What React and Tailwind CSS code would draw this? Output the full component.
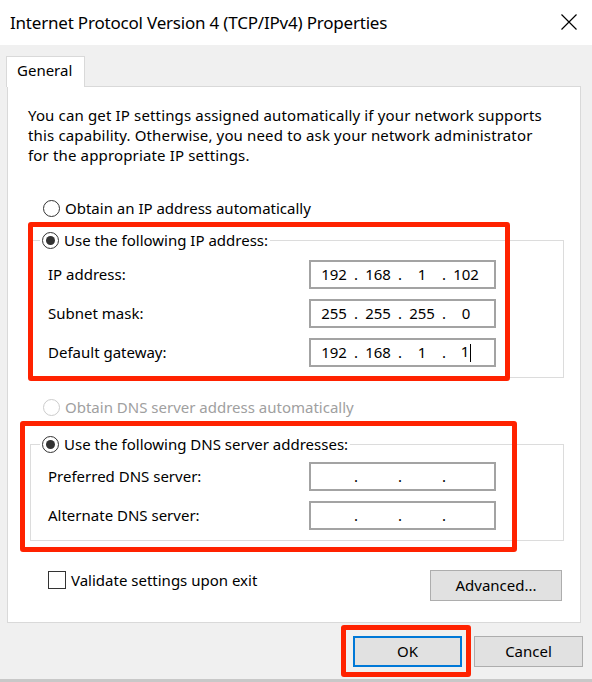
import React from 'react';

const font = { fontFamily: '"Noto Sans", "Open Sans", sans-serif' };

const Radio = ({ checked, disabled }) => (
  <span
    className={`w-[17px] h-[17px] shrink-0 rounded-full border bg-white flex items-center justify-center ${
      disabled ? 'border-[#cccccc]' : 'border-[#333333]'
    }`}
  >
    {checked && <span className="w-[9px] h-[9px] rounded-full bg-[#333333]" />}
  </span>
);

const IpBox = ({ parts, caret }) => (
  <div className="w-[187px] h-[29px] border-2 border-[#a3a3a3] bg-white flex items-center pl-[4px] text-[15px] text-black">
    {parts.map((p, i) => (
      <React.Fragment key={i}>
        <span className="w-[38px] text-center leading-none">
          {p}
          {caret && i === 3 && <span className="inline-block w-px h-[18px] bg-black align-middle ml-[1px]" />}
        </span>
        {i < 3 && <span className="w-[6px] text-center leading-none">.</span>}
      </React.Fragment>
    ))}
  </div>
);

const FieldRow = ({ label, parts, caret }) => (
  <div className="flex items-center h-[29px]">
    <span className="w-[261px] text-[15px]">{label}</span>
    <IpBox parts={parts} caret={caret} />
  </div>
);

export default function App() {
  return (
    <div className="w-[592px] h-[682px] bg-[#f0f0f0] flex flex-col text-black border-b-[3px] border-[#c8c8c8]" style={font}>
      {/* title bar */}
      <div className="h-[45px] bg-white flex items-center justify-between pl-[10px] pr-[15px] shrink-0">
        <span className="text-[17px] tracking-[-0.2px]">Internet Protocol Version 4 (TCP/IPv4) Properties</span>
        <svg width="16" height="16" viewBox="0 0 16 16" className="mb-[1px]">
          <path d="M0.5 0.5 L15.5 15.5 M15.5 0.5 L0.5 15.5" stroke="#000" strokeWidth="1.2" />
        </svg>
      </div>

      <div className="pl-[6px] pr-[11px] pt-[11px]">
        {/* tab */}
        <div className="w-[79px] h-[31px] bg-white border border-b-0 border-[#d9d9d9] pl-[10px] pt-[2px] text-[15px] relative z-10 -mb-px">
          General
        </div>

        {/* panel */}
        <div className="relative h-[537px] bg-white border border-[#d9d9d9] ml-px pl-[20px] pr-[16px] pt-[18px]">
          <p className="text-[15px] leading-[20px] tracking-[0.15px]">
            You can get IP settings assigned automatically if your network supports
            <br />
            this capability. Otherwise, you need to ask your network administrator
            <br />
            for the appropriate IP settings.
          </p>

          <div className="flex items-center gap-[5px] h-[20px] mt-[33px] pl-[15px] text-[15px]">
            <Radio />
            <span>Obtain an IP address automatically</span>
          </div>

          <fieldset className="mt-[12px] ml-[2px] border border-[#dcdcdc] pl-[17px] pr-[4px] pb-[10px]">
            <legend className="-ml-[8px] px-[2px] h-[20px] flex items-center gap-[5px] text-[15px]">
              <Radio checked />
              <span>Use the following IP address:</span>
            </legend>
            <div className="flex flex-col gap-[10px] pt-[10px]">
              <FieldRow label="IP address:" parts={['192', '168', '1', '102']} />
              <FieldRow label="Subnet mask:" parts={['255', '255', '255', '0']} />
              <FieldRow label="Default gateway:" parts={['192', '168', '1', '1']} caret />
            </div>
          </fieldset>

          <div className="flex items-center gap-[5px] h-[20px] mt-[19px] pl-[15px] text-[15px] text-[#a0a0a0]">
            <Radio disabled />
            <span>Obtain DNS server address automatically</span>
          </div>

          <fieldset className="mt-[17px] ml-[2px] border border-[#dcdcdc] pl-[17px] pr-[4px] pb-[10px]">
            <legend className="-ml-[8px] px-[2px] h-[20px] flex items-center gap-[5px] text-[15px]">
              <Radio checked />
              <span>Use the following DNS server addresses:</span>
            </legend>
            <div className="flex flex-col gap-[10px] pt-[8px]">
              <FieldRow label="Preferred DNS server:" parts={['', '', '', '']} />
              <FieldRow label="Alternate DNS server:" parts={['', '', '', '']} />
            </div>
          </fieldset>

          <div className="flex justify-between items-start mt-[27px]">
            <label className="flex items-center gap-[5px] h-[20px] pl-[20px] mt-[2px] text-[15px]">
              <span className="w-[18px] h-[18px] border border-[#333333] bg-white" />
              <span>Validate settings upon exit</span>
            </label>
            <button className="mt-[2px] mr-[2px] w-[132px] h-[31px] bg-[#e1e1e1] border border-[#adadad] text-[15px]">
              Advanced...
            </button>
          </div>

          {/* annotation boxes */}
          <div className="absolute left-[20px] top-[135px] w-[482px] h-[159px] border-[5px] border-[#ff2200] rounded-[3px] pointer-events-none" />
          <div className="absolute left-[12px] top-[334px] w-[497px] h-[131px] border-[5px] border-[#ff2200] rounded-[3px] pointer-events-none" />
        </div>
      </div>

      {/* dialog buttons */}
      <div className="flex justify-end gap-[12px] pr-[9px] pt-[13px]">
        <div className="relative">
          <button className="w-[109px] h-[31px] bg-[#e1e1e1] border-2 border-[#0078d7] text-[15px]">OK</button>
          <div className="absolute -left-[12px] -top-[11px] -right-[9px] -bottom-[10px] border-[5px] border-[#ff2200] rounded-[3px] pointer-events-none" />
        </div>
        <button className="w-[109px] h-[31px] bg-[#e1e1e1] border border-[#adadad] text-[15px]">Cancel</button>
      </div>
    </div>
  );
}
